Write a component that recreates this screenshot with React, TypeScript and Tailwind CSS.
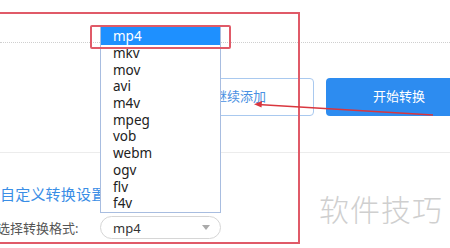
import React from "react";

const items = ["mp4", "mkv", "mov", "avi", "m4v", "mpeg", "vob", "webm", "ogv", "flv", "f4v"];

export default function App() {
  return (
    <div
      className="relative w-[450px] h-[248px] overflow-hidden bg-white text-[#333]"
      style={{ fontFamily: '"Noto Sans", "Noto Sans CJK SC", sans-serif' }}
    >
      {/* base page */}
      <div className="flex flex-col">
        <div className="h-[42px]" />
        <div className="border-t border-dotted border-[#cfcfcf]" />
        <div className="mt-[35px] ml-[166px] flex gap-[12px]">
          <button className="shrink-0 w-[148px] h-[38px] rounded-[4px] border border-[#a9c9ef] bg-white text-[13px] text-[#4a90e2]">
            继续添加
          </button>
          <button className="shrink-0 w-[146px] h-[38px] rounded-[4px] bg-[#2d8cf0] text-[13px] text-white">
            开始转换
          </button>
        </div>
        <div className="mt-[36px] border-t border-[#ececec]" />
        <div className="mt-[31px] text-[15px] leading-[20px] text-[#3a8ee6] tracking-[0.2px]">自定义转换设置</div>
        <div className="mt-[12px] flex items-center h-[23px]">
          <span className="w-[100px] ml-[-3px] text-[13px] leading-[16px] text-[#555]">选择转换格式:</span>
          <div className="ml-[3px] flex items-center justify-between w-[121px] h-[23px] rounded-full border border-[#d6d6d6] pl-[12px] pr-[10px] text-[13px] leading-[16px] text-[#333]">
            <span>mp4</span>
            <span className="w-0 h-0 border-l-[4px] border-r-[4px] border-t-[5px] border-l-transparent border-r-transparent border-t-[#aaa]" />
          </div>
        </div>
      </div>

      {/* dropdown list */}
      <div className="absolute left-[100px] top-[27px] w-[121px] border border-[#a8bde0] border-t-0 bg-white">
        {items.map((it, i) => (
          <div
            key={it}
            className={
              i === 0
                ? "h-[18px] leading-[18px] pl-[12px] text-[13.5px] bg-[#1e90ff] text-white"
                : "h-[16.7px] leading-[16.7px] pl-[12px] text-[13.5px] text-[#222]"
            }
          >
            {it}
          </div>
        ))}
      </div>

      {/* watermark */}
      <div className="absolute left-[319px] top-[193px] text-[30px] leading-[34px] text-[#cfcfcf] font-light tracking-[1px]">
        软件技巧
      </div>

      {/* red annotation boxes */}
      <div className="absolute left-[-4px] top-[12px] w-[304px] h-[232px] border-2 border-[#e05a68]" />
      <div className="absolute left-[90px] top-[25px] w-[141px] h-[24px] border-2 border-[#e05a68] rounded-[2px]" />

      {/* arrow */}
      <svg className="absolute left-0 top-0" width="450" height="248" viewBox="0 0 450 248">
        <line x1="433" y1="115" x2="258" y2="104.5" stroke="#d9363e" strokeWidth="1.5" />
        <path d="M254 104.2 L262 101 L261.5 107.5 Z" fill="#d9363e" />
      </svg>
    </div>
  );
}
